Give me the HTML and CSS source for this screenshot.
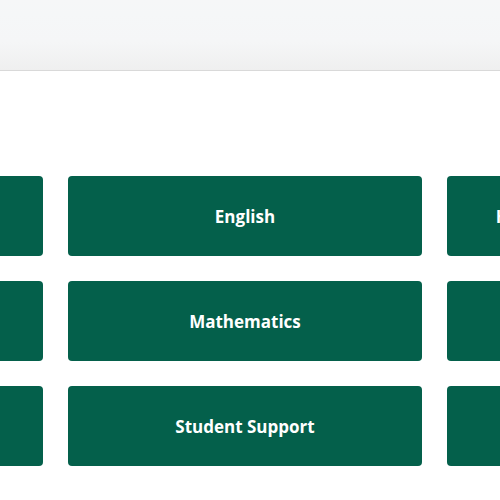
FILE: index.html
```html
<!DOCTYPE html>
<html lang="en">
<head>
<meta charset="utf-8">
<title>Subjects</title>
<link rel="stylesheet" href="styles.css">
</head>
<body>
<header class="topbar"></header>
<main class="content">
  <div class="tiles">
    <a class="tile" href="#">Arts</a>
    <a class="tile" href="#">English</a>
    <a class="tile" href="#">Health and Physical Education</a>
    <a class="tile" href="#">Languages</a>
    <a class="tile" href="#">Mathematics</a>
    <a class="tile" href="#">Science</a>
    <a class="tile" href="#">Social Sciences</a>
    <a class="tile" href="#">Student Support</a>
    <a class="tile" href="#">Technology</a>
  </div>
</main>
</body>
</html>
```

FILE: styles.css
```css
html, body {
  margin: 0;
  padding: 0;
  background: #ffffff;
  overflow: hidden;
  font-family: "Open Sans", "Noto Sans", sans-serif;
}

.topbar {
  height: 70px;
  background: linear-gradient(to bottom, #f6f7f8 0%, #f5f7f8 20%, #f5f6f7 60%, #efefef 100%);
  border-bottom: 1px solid #d9d9d9;
}

.content {
  padding-top: 105px;
  display: flex;
  justify-content: center;
  padding-right: 10px;
}

.tiles {
  display: grid;
  grid-template-columns: repeat(3, 354px);
  gap: 25px;
  flex-shrink: 0;
}

.tile {
  height: 80px;
  background: #04604b;
  border-radius: 4px;
  color: #ffffff;
  text-decoration: none;
  font-weight: 700;
  font-size: 17px;
  display: flex;
  align-items: center;
  justify-content: center;
}
```
